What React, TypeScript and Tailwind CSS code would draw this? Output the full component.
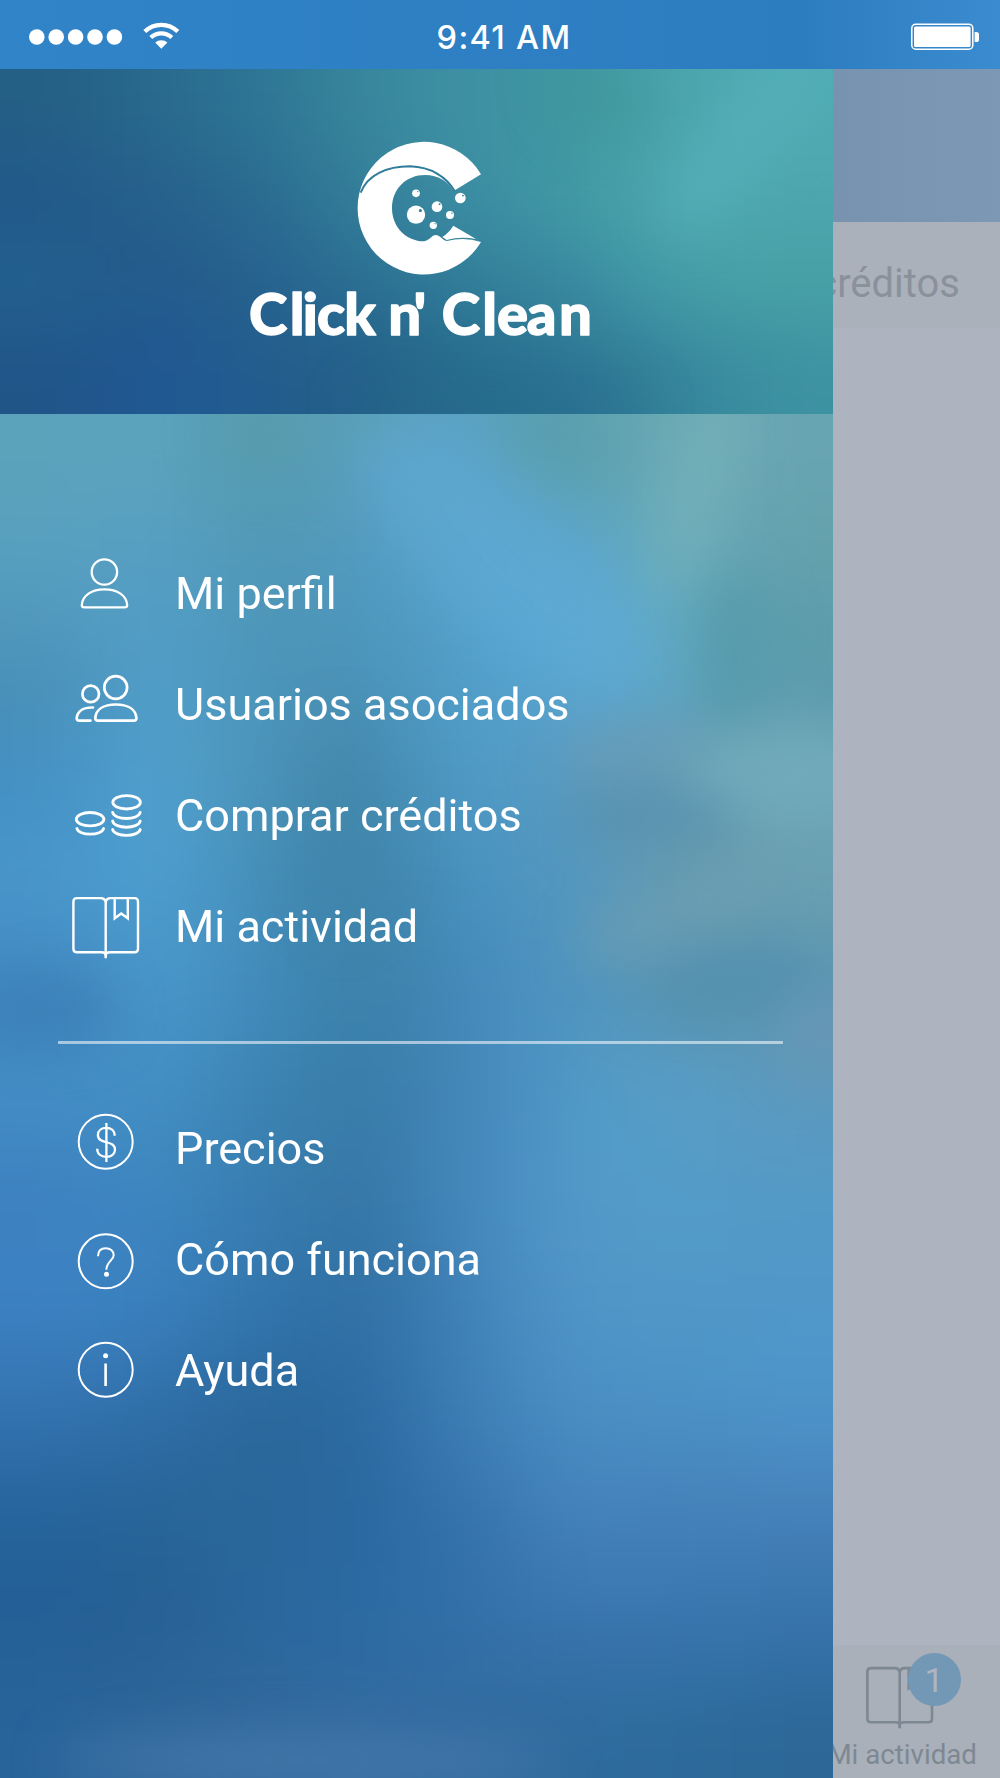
import type { ReactNode } from "react";

// Colour fields behind the drawer, one hex per cell, left to right
const headerMesh = [
    "245f85 296a8e 2d7595 38879c 3e91a3 3f95a0 4ba6ae 4fabb3",
    "21598a 265f8a 2a6a90 347f9a 3c8ea4 429aa3 4eaab2 4da6ae",
    "23608f 235a8c 26618e 2b6f92 317d9a 38889f 469fa8 48a0a6",
    "205588 205893 225c8e 245f88 276c8c 2b7394 35849a 3d92a2",
];

const bodyMesh = [
    "5ba2bb 5ca4bf 549ab0 5a9fbd 5aa3c8 5b9fae 6aabb5 68a5b2",
    "569fc0 559ec5 4f97b6 509ac0 57a3cf 59a7d4 66aabb 62a0ab",
    "4a90b6 519fcc 4b94b8 4a92b6 529fcb 58a6d2 5fabca 5a9bac",
    "4390c4 52a2d0 4b93b8 458aaf 4e9bc8 5799c0 6495a9 6ba3b5",
    "4a97cc 4e9fd0 438db9 3f84a8 4791c0 5498c0 649aaf 6ba0b2",
    "3f85bf 4a98cb 418abb 3a80a8 4489bb 4f95c2 5b93ae 5b94b0",
    "438ec5 438fc5 3b83b0 387ca9 4486b9 509ac8 579fc9 5c99be",
    "3d80c0 3c86c0 387db0 3575a4 4489bd 539ac9 539bc8 539ac7",
    "3c82c3 3b82c0 3275ad 306fa3 4183ba 5096c7 5198c8 5198ca",
    "3473b0 2f6ea8 2a6698 2a6aa2 3f80b6 4a8fc4 4b91c4 4c94c9",
    "24639b 276496 2a679b 29689f 3572ac 4583bb 447fb9 4680b9",
    "245f95 265f93 2a679c 2a6aa3 3370a8 3974ae 3976ae 3774ac",
    "28649a 2e679a 32699d 336b9f 326b9f 2f6b9d 2d6b9c 2c6797",
];

type Blob = {
    x: number;
    y: number;
    rx: number;
    ry: number;
    turn?: number;
    color: string;
    alpha: number;
};

const headerBlobs: Blob[] = [
    { x: 745, y: 66, rx: 35, ry: 120, turn: 38, color: "#58b3bd", alpha: 0.5 },
    { x: 600, y: 30, rx: 60, ry: 40, turn: 30, color: "#409598", alpha: 0.4 },
    { x: 500, y: 335, rx: 150, ry: 25, color: "#266a8b", alpha: 0.5 },
];

const bodyBlobs: Blob[] = [
    { x: 500, y: 145, rx: 185, ry: 66, turn: 45, color: "#5fabd8", alpha: 0.5 },
    { x: 262, y: 20, rx: 50, ry: 45, color: "#589ba8", alpha: 0.6 },
    { x: 350, y: 0, rx: 70, ry: 22, color: "#5a9fb2", alpha: 0.6 },
    { x: 548, y: 20, rx: 60, ry: 40, turn: 40, color: "#599fae", alpha: 0.6 },
    { x: 698, y: 70, rx: 32, ry: 110, turn: 15, color: "#78b4bb", alpha: 0.6 },
    { x: 735, y: 240, rx: 40, ry: 80, color: "#5498a8", alpha: 0.7 },
    { x: 780, y: 360, rx: 100, ry: 48, color: "#74aebe", alpha: 0.75 },
    { x: 630, y: 338, rx: 80, ry: 28, color: "#6c9db8", alpha: 0.6 },
    { x: 650, y: 398, rx: 90, ry: 24, color: "#5590af", alpha: 0.75 },
    { x: 680, y: 495, rx: 110, ry: 28, turn: -22, color: "#6f9fb4", alpha: 0.65 },
    { x: 740, y: 566, rx: 80, ry: 30, turn: -8, color: "#4d8fae", alpha: 0.75 },
    { x: 825, y: 620, rx: 45, ry: 45, color: "#6b98b6", alpha: 0.75 },
    { x: 343, y: 410, rx: 45, ry: 110, color: "#3f84a8", alpha: 0.4 },
    { x: 48, y: 597, rx: 70, ry: 38, color: "#3879b2", alpha: 0.5 },
    { x: 306, y: 1346, rx: 250, ry: 28, color: "#457aac", alpha: 0.75 },
];

type MeshProps = {
    id: string;
    rows: string[];
    blobs: Blob[];
    height: number;
};

function Mesh({ id, rows, blobs, height }: MeshProps) {
    const cellW = 833 / 8;
    const cellH = height / rows.length;
    const bounds = {
        filterUnits: "userSpaceOnUse",
        x: -200,
        y: -200,
        width: 1233,
        height: height + 400,
        colorInterpolationFilters: "sRGB",
    } as const;

    return (
        <svg
            className="absolute inset-0 size-full"
            viewBox={`0 0 833 ${height}`}
            preserveAspectRatio="none"
            aria-hidden="true"
        >
            <filter id={id} {...bounds}>
                <feGaussianBlur stdDeviation={`50 ${cellH * 0.46}`} />
            </filter>
            <filter id={`${id}-soft`} {...bounds}>
                <feGaussianBlur stdDeviation="24" />
            </filter>
            <g filter={`url(#${id})`}>
                {rows.map((row, r) =>
                    row.split(" ").map((color, c) => {
                        // outer cells bleed past the edge so the blur stays opaque
                        const x = c === 0 ? -200 : c * cellW;
                        const y = r === 0 ? -200 : r * cellH;
                        const right = c === 7 ? 1033 : (c + 1) * cellW + 1;
                        const bottom =
                            r === rows.length - 1
                                ? height + 200
                                : (r + 1) * cellH + 1;
                        return (
                            <rect
                                key={`${r}-${c}`}
                                x={x}
                                y={y}
                                width={right - x}
                                height={bottom - y}
                                fill={`#${color}`}
                            />
                        );
                    }),
                )}
            </g>
            <g filter={`url(#${id}-soft)`}>
                {blobs.map((b) => (
                    <ellipse
                        key={`${b.x}-${b.y}`}
                        cx={b.x}
                        cy={b.y}
                        rx={b.rx}
                        ry={b.ry}
                        transform={`rotate(${b.turn ?? 0} ${b.x} ${b.y})`}
                        fill={b.color}
                        fillOpacity={b.alpha}
                    />
                ))}
            </g>
        </svg>
    );
}

function StatusBar() {
    return (
        <header className="flex h-[69px] items-center justify-between bg-linear-to-r from-[#3084c7] via-[#2c7cc0] via-80% to-[#3b8bd0] text-white">
            <svg width="200" height="69" fill="currentColor">
                {[36.8, 56.2, 75.6, 95, 114.4].map((x) => (
                    <circle key={x} cx={x} cy="37" r="7.8" />
                ))}
                <g fill="none" stroke="currentColor" strokeWidth="4.2">
                    <path d="M144.8 31.6a23.4 23.4 0 0 1 33 0" />
                    <path d="M150.8 37.6a15 15 0 0 1 21 0" />
                </g>
                <path d="M155.2 42.6a8.8 8.8 0 0 1 12.2 0l-6.1 6.2z" />
            </svg>
            <span className="mt-[8px] ml-[8px] font-['Inter'] text-[32.5px] leading-none font-medium tracking-[1.3px]">
                9:41 AM
            </span>
            <svg width="200" height="69" fill="currentColor">
                <rect
                    x="111.8"
                    y="24.2"
                    width="61"
                    height="25"
                    rx="4"
                    fill="none"
                    stroke="currentColor"
                    strokeWidth="1.5"
                />
                <rect x="114" y="26.4" width="56.6" height="20.6" rx="1.5" />
                <path d="M174.6 32H176.4Q179 32 179 34.6V39.4Q179 42 176.4 42H174.6Z" />
            </svg>
        </header>
    );
}

function Logo() {
    return (
        <svg
            className="relative"
            width="380"
            height="240"
            viewBox="0 0 1140 720"
            fill="#fff"
            role="img"
            aria-label="Click n' Clean"
        >
            <path d="M753 163A199 199 0 1 0 753 366Q705 350 650 363Q640 361 632 352Q615 338 602 353Q590 365 572 364C520 357 486 315 486 265C486 205 530 165 585 165C625 165 655 185 671 212L677 209Z" />
            <path
                d="M392 218C412 165 470 139 540 139C605 141 650 172 674 213"
                fill="none"
                stroke="#2f7c9b"
                strokeWidth="6"
            />
            <path d="M637 351Q657 338 670 317L738 357Q692 348 650 360Z" />
            {[
                [558, 220, 11.5],
                [558, 284, 27.5],
                [621, 260, 16],
                [691, 234, 16],
                [660, 285, 12],
                [610, 316, 11],
            ].map(([x, y, r]) => (
                <g key={`${x}-${y}`}>
                    <circle cx={x} cy={y} r={r} />
                    <circle
                        cx={x + r * 0.48}
                        cy={y - r * 0.46}
                        r={r * 0.17}
                        fill="#2f7c9b"
                    />
                </g>
            ))}
            <g
                className="font-['Lato',sans-serif] font-black"
                fontSize="174"
                stroke="#fff"
                strokeWidth="4"
                strokeLinejoin="round"
            >
                <text x="57 179 218 261 343" y="646">
                    Click
                </text>
                <text x="475 551" y="646">
                    n'
                </text>
                <text x="635 757 801 890 987" y="646">
                    Clean
                </text>
            </g>
        </svg>
    );
}

type IconProps = {
    children: ReactNode;
    strokeWidth?: number;
};

function Icon({ children, strokeWidth = 2.4 }: IconProps) {
    return (
        <svg
            className="shrink-0"
            width="85"
            height="111"
            fill="none"
            stroke="currentColor"
            strokeWidth={strokeWidth}
            strokeLinecap="round"
            strokeLinejoin="round"
            aria-hidden="true"
        >
            {children}
        </svg>
    );
}

function BookPaths() {
    return (
        <>
            <path d="M45.7 30.5Q44.5 27.1 41 27.1H17Q13.4 27.1 13.4 30.7V77.7Q13.4 81.3 17 81.3H41.5Q45.7 81.3 45.7 84.5Q45.7 81.3 50 81.3H74.4Q78 81.3 78 77.7V30.7Q78 27.1 74.4 27.1H50.4Q46.9 27.1 45.7 30.5Z" />
            <path d="M45.7 30V87.3" strokeLinecap="butt" />
            <path
                d="M54.7 27.5V47.3L61.2 42.6L67.8 47.3V27.5"
                strokeLinecap="butt"
                strokeLinejoin="miter"
            />
        </>
    );
}

const mainItems = [
    {
        label: "Mi perfil",
        icon: (
            <Icon strokeWidth={2.3}>
                <circle cx="44.4" cy="34" r="12.7" />
                <path d="M24.5 69.4Q21.8 69.4 21.8 67C22.4 57.5 31.5 51.3 44.5 51.3S66.6 57.5 67.2 67Q67.2 69.4 64.5 69.4Z" />
            </Icon>
        ),
    },
    {
        label: "Usuarios asociados",
        icon: (
            <Icon strokeWidth={2.7}>
                <circle cx="30.7" cy="44.9" r="8.3" />
                <circle cx="55.7" cy="38.5" r="11.4" />
                <path d="M38 71.7Q35.3 71.7 35.3 69C36 60.5 43.5 55.5 55.8 55.5S75.7 60.5 76.4 69Q76.4 71.7 73.7 71.7Z" />
                <path d="M33 58.5C23.5 58.2 17.5 62 16.7 69Q16.6 71.6 19.3 71.6H30.5" />
            </Icon>
        ),
    },
    {
        label: "Comprar créditos",
        icon: (
            <Icon strokeWidth={2.8}>
                <ellipse cx="30.1" cy="59.2" rx="13.8" ry="6.7" />
                <path d="M16.9 68.5C18.5 76 42 76 43.6 68.5" />
                <ellipse cx="66.6" cy="42.3" rx="13.8" ry="6.7" />
                <path d="M52.6 52.3C54.2 60.6 78.6 60.6 80.2 52.3" />
                <path d="M52.6 61C54.2 69.3 78.6 69.3 80.2 61" />
                <path d="M52.6 69.5C54.2 77.3 78.6 77.3 80.2 69.5" />
            </Icon>
        ),
    },
    {
        label: "Mi actividad",
        icon: (
            <Icon strokeWidth={2.4}>
                <BookPaths />
            </Icon>
        ),
    },
];

const infoItems = [
    {
        label: "Precios",
        icon: (
            <Icon strokeWidth={2}>
                <circle cx="45.7" cy="48.7" r="27" />
                <path
                    d="M54.7 42.8C54.7 37.8 51.2 34.9 46.3 34.9S37.9 37.7 37.9 42C37.9 52 55 46.5 55 56.5C55 61 51.5 63.8 46.3 63.8S37.2 60.8 37.2 55.8"
                    strokeWidth="2.3"
                    strokeLinecap="butt"
                />
                <path d="M46.4 30V69" strokeWidth="2.3" strokeLinecap="butt" />
            </Icon>
        ),
    },
    {
        label: "Cómo funciona",
        icon: (
            <Icon strokeWidth={2}>
                <circle cx="45.7" cy="57.3" r="27" />
                <path
                    d="M38 52.3C38 46.6 41.3 44.2 45.7 44.2S53.7 46.8 53.7 51.2C53.7 56.5 46.4 57.3 46.4 65.8"
                    strokeLinecap="butt"
                />
                <circle cx="46.5" cy="70.3" r="1.5" fill="currentColor" />
            </Icon>
        ),
    },
    {
        label: "Ayuda",
        icon: (
            <Icon strokeWidth={2}>
                <circle cx="45.7" cy="54.7" r="27" />
                <path d="M45.6 48.5V71" strokeWidth="2.6" strokeLinecap="butt" />
                <circle cx="45.6" cy="40.7" r="1.5" fill="currentColor" />
            </Icon>
        ),
    },
];

function Menu({ items }: { items: typeof mainItems }) {
    return (
        <ul className="relative pl-[60px]">
            {items.map((item) => (
                <li key={item.label} className="flex h-[111px] items-center">
                    {item.icon}
                    <a className="ml-[30px] text-[45px] leading-none whitespace-nowrap">
                        {item.label}
                    </a>
                </li>
            ))}
        </ul>
    );
}

function Drawer() {
    return (
        <aside className="flex w-[833px] shrink-0 flex-col text-white">
            <div className="relative flex h-[345px] overflow-hidden pt-[51px] pl-[230px]">
                <Mesh
                    id="header-blur"
                    rows={headerMesh}
                    blobs={headerBlobs}
                    height={345}
                />
                <Logo />
            </div>
            <nav className="relative flex-1 overflow-hidden pt-[124px]">
                <Mesh
                    id="body-blur"
                    rows={bodyMesh}
                    blobs={bodyBlobs}
                    height={1364}
                />
                <Menu items={mainItems} />
                <hr className="relative mt-[59px] mb-[49px] ml-[58px] h-[3px] w-[725px] border-0 bg-white/55" />
                <Menu items={infoItems} />
            </nav>
        </aside>
    );
}

function DimmedPage() {
    return (
        <main className="flex min-w-0 flex-1 flex-col overflow-hidden bg-[#aeb4bf]">
            <div className="h-[153px] bg-linear-to-r from-[#7893b0] to-[#7d98b5]" />
            <div className="flex h-[106px] items-center justify-end bg-[#aab1bb] pt-[17px] pr-[40px] text-[40px] leading-none text-[#8a919b]">
                créditos
            </div>
            <div className="flex-1" />
            <div className="flex h-[133px] flex-col items-end bg-[#a9b0b9] text-[#7e8893]">
                <div className="relative mr-[61.5px] h-[91px] w-[85px]">
                    <svg
                        className="-mt-1"
                        width="85"
                        height="95"
                        fill="none"
                        stroke="currentColor"
                        strokeWidth="2.6"
                        strokeLinejoin="round"
                    >
                        <BookPaths />
                    </svg>
                    <span className="absolute top-[8px] left-[54px] flex size-[53px] items-center justify-center rounded-full bg-[#7298b5] text-[34px] leading-none text-[#adb5c0]">
                        1
                    </span>
                </div>
                <span className="mr-[23px] text-[27.7px] leading-[38px] whitespace-nowrap">
                    Mi actividad
                </span>
            </div>
        </main>
    );
}

export default function App() {
    return (
        <div className="flex h-[1778px] w-[1000px] flex-col overflow-hidden font-['Roboto',sans-serif]">
            <StatusBar />
            <div className="flex flex-1">
                <Drawer />
                <DimmedPage />
            </div>
        </div>
    );
}
